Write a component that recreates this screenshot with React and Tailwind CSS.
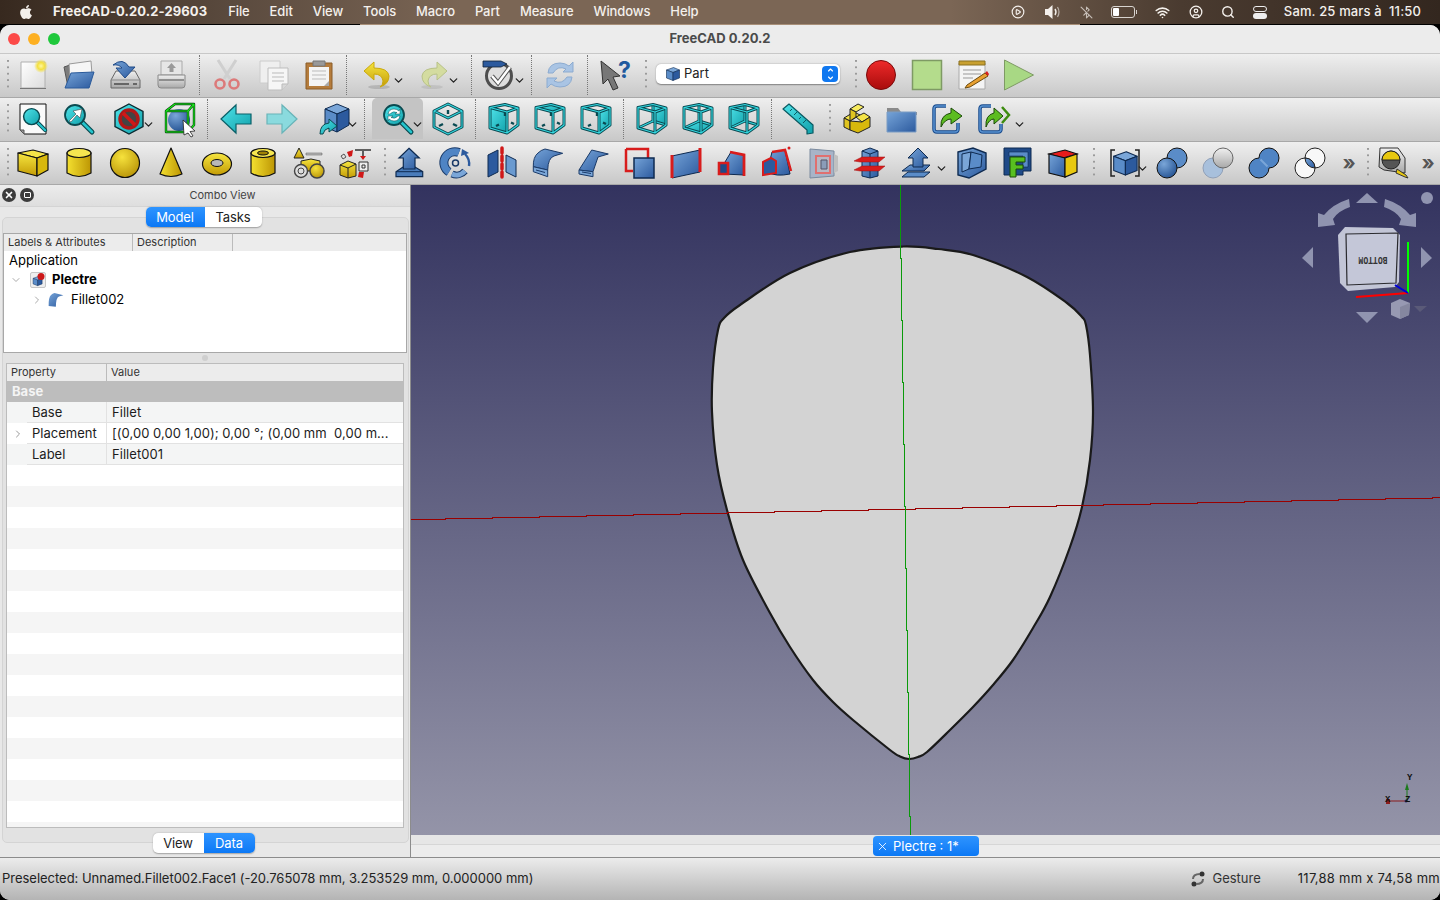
import {
  BluetoothOff,
  ChevronDown,
  ChevronRight,
  CirclePlay,
  CircleUser,
  Search,
  Wifi,
  X,
} from "lucide-react";
import { FaApple } from "react-icons/fa";

const Defs = () => (
  <svg className="absolute h-0 w-0">
    <defs>
      <linearGradient id="ylw" x1="0" y1="0" x2="0" y2="1">
        <stop offset="0" stopColor="#f6e640" />
        <stop offset="1" stopColor="#c49c06" />
      </linearGradient>
      <linearGradient id="ylh" x1="0" y1="0" x2="1" y2="0">
        <stop offset="0" stopColor="#f4e030" />
        <stop offset="1" stopColor="#bd9604" />
      </linearGradient>
      <linearGradient id="blu" x1="0" y1="0" x2="1" y2="1">
        <stop offset="0" stopColor="#76a4d8" />
        <stop offset="1" stopColor="#2c5a9e" />
      </linearGradient>
      <linearGradient id="tl" x1="0" y1="0" x2="1" y2="1">
        <stop offset="0" stopColor="#50e4ea" />
        <stop offset="1" stopColor="#10a0aa" />
      </linearGradient>
      <linearGradient id="gry" x1="0" y1="0" x2="0" y2="1">
        <stop offset="0" stopColor="#f0f0f0" />
        <stop offset="1" stopColor="#a8a8a8" />
      </linearGradient>
      <linearGradient id="pg" x1="0" y1="0" x2="1" y2="1">
        <stop offset="0" stopColor="#ffffff" />
        <stop offset="1" stopColor="#dcdcdc" />
      </linearGradient>
      <linearGradient id="red" x1="0" y1="0" x2="0" y2="1">
        <stop offset="0" stopColor="#ee2a2a" />
        <stop offset="1" stopColor="#a80c0c" />
      </linearGradient>
      <radialGradient id="glow">
        <stop offset="0" stopColor="#fff8a0" />
        <stop offset="0.5" stopColor="#f4e040" />
        <stop offset="1" stopColor="#f4e040" stopOpacity="0" />
      </radialGradient>
      <radialGradient id="sph" cx="0.35" cy="0.3" r="0.8">
        <stop offset="0" stopColor="#7aa6d8" />
        <stop offset="1" stopColor="#204f90" />
      </radialGradient>
      <radialGradient id="ysph" cx="0.4" cy="0.3" r="0.8">
        <stop offset="0" stopColor="#f6e23c" />
        <stop offset="1" stopColor="#b48e04" />
      </radialGradient>
      <linearGradient id="viewBg" x1="0" y1="0" x2="0" y2="1">
        <stop offset="0" stopColor="#33335f" />
        <stop offset="1" stopColor="#9494a8" />
      </linearGradient>
    </defs>
  </svg>
);

const Ic = ({ children, className = "" }) => (
  <svg viewBox="0 0 32 32" className={`h-8 w-8 overflow-visible ${className}`} fill="none">
    {children}
  </svg>
);

const YBox = () => (
  <g stroke="#111" strokeWidth="1.2" strokeLinejoin="round">
    <path d="M1 6 16 3 31 7 20 11Z" fill="#f4e448" />
    <path d="M1 6 20 11V29L1 24Z" fill="url(#ylw)" />
    <path d="M20 11 31 7V23L20 29Z" fill="#d8b80c" />
  </g>
);

const BBox = () => (
  <g stroke="#0e2a50" strokeWidth="1.2" strokeLinejoin="round">
    <path d="M3 8 17 3 29 8 16 13Z" fill="#7aa6d8" />
    <path d="M3 8 16 13V29L3 24Z" fill="#5a8cc8" />
    <path d="M16 13 29 8V24L16 29Z" fill="#2c5a9e" />
  </g>
);

const frontEdges = "M2 4.500 17 1.500 30 5 19 9ZM2 4.500V25L19 30V9M19 30 30 22V5";
const backEdges = "M17 1.500V18M17 18 2 25M17 18 30 22";

// wire cube for the standard views, face = the filled side
const ViewCube = ({ face, back }) => (
  <g strokeLinejoin="round">
    {face && <path d={face} fill="url(#tl)" />}
    {back ? (
      <g>
        <path d={backEdges} stroke="#0a4a52" strokeWidth="3" />
        <path d={backEdges} stroke="#34d8e0" strokeWidth="1.200" />
      </g>
    ) : (
      <path d="M17 9V13M8 23 11 21.500M23 19.500 26 21" stroke="#0a4a52" strokeWidth="2.400" />
    )}
    <path d={frontEdges} stroke="#0a4a52" strokeWidth="3" />
    <path d={frontEdges} stroke="#34d8e0" strokeWidth="1.200" />
  </g>
);

const Glass = ({ children }) => (
  <g>
    <path d="M19 19 29 29" stroke="#0b4a50" strokeWidth="5" strokeLinecap="round" />
    <path d="M19 19 29 29" stroke="#24c4cc" strokeWidth="2.6" strokeLinecap="round" />
    <circle cx="12" cy="12" r="10" fill="url(#tl)" stroke="#0b4a50" strokeWidth="1.8" />
    {children}
  </g>
);

const I = {
  newDoc: (
    <Ic>
      <path d="M4 3H28V29H4Z" fill="url(#pg)" stroke="#b0b0b0" />
      <path d="M3 29.500H29" stroke="#777" />
      <circle cx="24" cy="7" r="7" fill="url(#glow)" />
    </Ic>
  ),
  open: (
    <Ic>
      <path d="M1 8 7 6V26L5 28Z" fill="#7c7c7c" stroke="#555" />
      <path d="M6 5 28 2 29 16 7 19Z" fill="#f6f6f6" stroke="#999" />
      <path d="M2 29 8 14 31 13 26 29Z" fill="url(#blu)" stroke="#2a5a9a" />
    </Ic>
  ),
  save: (
    <Ic>
      <path d="M2 21 7 12H26L31 21V29H2Z" fill="url(#gry)" stroke="#666" />
      <path d="M2 21H31" stroke="#888" />
      <path d="M5 25H20M24 25H28" stroke="#666" strokeWidth="2" />
      <path d="M4 6Q14-2 20 8H26L16 19 7 9H13Q10 5 4 6Z" fill="url(#blu)" stroke="#1f4a88" />
    </Ic>
  ),
  print: (
    <Ic>
      <path d="M6 2H27V16H6Z" fill="#e6e6e6" stroke="#aaa" />
      <path d="M16.500 4 21 9H18.500V13H14.500V9H12Z" fill="#9a9a9a" />
      <path d="M3 16H30V26Q30 29 27 29H6Q3 29 3 26Z" fill="url(#gry)" stroke="#888" />
      <path d="M4 21H29" stroke="#777" strokeWidth="1.500" />
    </Ic>
  ),
  cut: (
    <Ic>
      <path d="M7 1 19 20M25 1 13 20" stroke="#cfcfcf" strokeWidth="3" />
      <circle cx="9" cy="25" r="4.500" stroke="#dc7a7a" strokeWidth="2.600" />
      <circle cx="23" cy="25" r="4.500" stroke="#dc7a7a" strokeWidth="2.600" />
    </Ic>
  ),
  copy: (
    <Ic>
      <path d="M3 2H23V24H3Z" fill="#efefef" stroke="#ccc" />
      <path d="M11 9H31V25L25 31H11Z" fill="#f6f6f6" stroke="#bdbdbd" />
      <path d="M15 14H27M15 18H27M15 22H27" stroke="#bbb" />
      <path d="M25 31V25H31" fill="#d8d8d8" stroke="#bbb" />
    </Ic>
  ),
  paste: (
    <Ic>
      <path d="M3 4H29V30H3Z" fill="#b57c3c" stroke="#8a5c28" />
      <path d="M6 8H26V27H6Z" fill="#f4f4f4" />
      <path d="M9 12H23M9 16H23M9 20H23" stroke="#bbb" />
      <path d="M10 2H22V7H10Z" fill="#999" stroke="#777" />
      <path d="M21 27 26 22V27Z" fill="#aaa" />
    </Ic>
  ),
  undo: (
    <Ic>
      <ellipse cx="17" cy="28" rx="11" ry="2" fill="#00000022" />
      <path d="M12 3 2 12 12 21V15Q20 15 21 22 21 26 18 28 27 25 27 17 26 9 12 9Z" fill="url(#ylw)" stroke="#caa90c" />
    </Ic>
  ),
  redo: (
    <Ic>
      <ellipse cx="15" cy="28" rx="11" ry="2" fill="#00000014" />
      <path d="M20 3 30 12 20 21V15Q12 15 11 22 11 26 14 28 5 25 5 17 6 9 20 9Z" fill="#d4dca0" stroke="#b8c288" />
    </Ic>
  ),
  check: (
    <Ic>
      <circle cx="16" cy="17" r="12.500" fill="#dedede" stroke="#4e4e4e" strokeWidth="3" />
      <path d="M9 17 15 24 27 8" stroke="#555" strokeWidth="4.500" />
      <path d="M9 17 15 24 27 8" stroke="#fff" strokeWidth="2.400" />
      <path d="M0 2H18L24 5 18 8H0Z" fill="#2c5a9e" stroke="#123" strokeWidth="0.800" />
    </Ic>
  ),
  refresh: (
    <Ic>
      <path d="M4 14Q5 4 16 4 21 4 25 7L29 3V13H19L22 10Q14 6 9 14Z" fill="#a9c4e4" stroke="#8cabd0" />
      <path d="M28 18Q27 28 16 28 11 28 7 25L3 29V19H13L10 22Q18 26 23 18Z" fill="#a9c4e4" stroke="#8cabd0" />
    </Ic>
  ),
  what: (
    <Ic>
      <path d="M2 2 21 17 14 18 19 29 14 31 9 20 4 25Z" fill="#777" stroke="#333" />
      <text x="19" y="19" fontSize="23" fontWeight="700" fill="#1f5a9e" fontFamily="Inter, sans-serif">
        ?
      </text>
    </Ic>
  ),
  rec: (
    <Ic>
      <circle cx="16" cy="16" r="14.500" fill="url(#red)" stroke="#7a0a0a" />
    </Ic>
  ),
  stop: (
    <Ic>
      <path d="M1.500 1.500H30.500V30.500H1.500Z" fill="#b4dc8c" stroke="#7e9a64" strokeWidth="1.500" />
    </Ic>
  ),
  macro: (
    <Ic>
      <path d="M2 4H28V30H2Z" fill="#f4f4f4" stroke="#aaa" />
      <path d="M2 2H28V6H2Z" fill="#c8a030" stroke="#8a7020" />
      <path d="M6 11H24M6 15H24M6 19H16" stroke="#999" />
      <path d="M10 26 28 14 31 17 13 28 8 29Z" fill="#e8a030" stroke="#6a4a10" />
      <path d="M28 14 31 17 32 15 30 12Z" fill="#d82020" />
    </Ic>
  ),
  play: (
    <Ic>
      <path d="M1.500 1 30.500 16 1.500 31Z" fill="#a8d884" stroke="#7e9a64" />
    </Ic>
  ),

  fitAll: (
    <Ic>
      <path d="M3 1H29V31H7L3 27Z" fill="#fafafa" stroke="#111" />
      <path d="M3 27H7V31Z" fill="#999" stroke="#555" />
      <g transform="translate(5 4) scale(0.8)">
        <Glass />
      </g>
    </Ic>
  ),
  fitSel: (
    <Ic>
      <Glass>
        <path d="M6 18 13 11 10 8 19 6 17 15 14 12 8 19Z" fill="#fff" stroke="#444" strokeWidth="0.600" />
      </Glass>
    </Ic>
  ),
  noDraw: (
    <Ic>
      <path d="M16 1 30 8.500V23.500L16 31 2 23.500V8.500Z" fill="url(#tl)" stroke="#0b2a30" strokeWidth="1.400" />
      <circle cx="16" cy="16" r="9" fill="#444" stroke="#b01818" strokeWidth="3.500" />
      <path d="M10 10 22 22" stroke="#d01818" strokeWidth="3.500" />
    </Ic>
  ),
  select: (
    <Ic>
      <circle cx="15" cy="17" r="11" fill="url(#sph)" />
      <path d="M2 8 11 1H30V22L24 29H2ZM2 8H24V29M24 8 30 1" stroke="#063a10" strokeWidth="2.400" strokeLinejoin="round" />
      <path d="M2 8 11 1H30V22L24 29H2ZM2 8H24V29M24 8 30 1" stroke="#18e818" strokeWidth="1.200" strokeLinejoin="round" />
      <path d="M19 17 31 28 26 28.500 29 33 27 34 24 30 20 32Z" fill="#fff" stroke="#222" strokeWidth="0.800" />
    </Ic>
  ),
  back: (
    <Ic>
      <path d="M1 16 16 2V11H31V21H16V30Z" fill="url(#tl)" stroke="#0a6068" strokeWidth="1.200" />
    </Ic>
  ),
  forward: (
    <Ic>
      <path d="M31 16 16 2V11H1V21H16V30Z" fill="#8adade" stroke="#68b4b8" strokeWidth="1.200" />
    </Ic>
  ),
  viewCube: (
    <Ic>
      <path d="M8 6 20 1 32 6 20 11Z" fill="#7aa6d8" stroke="#0e2a50" />
      <path d="M8 6 20 11V29L8 24Z" fill="#5a8cc8" stroke="#0e2a50" />
      <path d="M20 11 32 6V22L20 29Z" fill="#2c5a9e" stroke="#0e2a50" />
      <path d="M3 31Q3 21 12 20V16L20 23 12 29V25Q7 26 6 31Z" fill="url(#tl)" stroke="#0a4a50" />
    </Ic>
  ),
  sync: (
    <Ic>
      <Glass>
        <path d="M6 11Q7 6 12 6 15 6 17 8L18 6V11H13L15 9.500Q11 7.500 8 11Z" fill="#fff" stroke="#0b4a50" strokeWidth="0.500" />
        <path d="M18 13Q17 18 12 18 9 18 7 16L6 18V13H11L9 14.500Q13 16.500 16 13Z" fill="#fff" stroke="#0b4a50" strokeWidth="0.500" />
      </Glass>
    </Ic>
  ),
  iso: (
    <Ic>
      <path d="M16 1 30 8V24L16 31 2 24V8ZM2 8 16 15 30 8" stroke="#0a4a52" strokeWidth="3" strokeLinejoin="round" />
      <path d="M16 1 30 8V24L16 31 2 24V8ZM2 8 16 15 30 8" stroke="#34d8e0" strokeWidth="1.100" strokeLinejoin="round" />
      <path d="M7 23 11 21M21 21 25 23M16 7V11" stroke="#0a4a52" strokeWidth="2.400" />
    </Ic>
  ),
  front: <Ic><ViewCube face="M2 4.500 19 9V30L2 25Z" /></Ic>,
  top: <Ic><ViewCube face="M2 4.500 17 1.500 30 5 19 9Z" /></Ic>,
  right: <Ic><ViewCube face="M19 9 30 5V22L19 30Z" /></Ic>,
  rear: <Ic><ViewCube back face="M17 1.500 30 5V22L17 18Z" /></Ic>,
  bottom: <Ic><ViewCube back face="M2 25 17 18 30 22 19 30Z" /></Ic>,
  left: <Ic><ViewCube back face="M2 4.500 17 1.500V18L2 25Z" /></Ic>,
  ruler: (
    <Ic>
      <path d="M1 6 7 1 31 22 31 30 25 31 25 27Z" fill="url(#tl)" stroke="#0a5a62" strokeWidth="1.200" strokeLinejoin="round" />
      <path d="M8 8 10 6M12 12 15 9M17 16 19 14M21 20 24 17" stroke="#0a5a62" />
    </Ic>
  ),
  part: (
    <Ic>
      <g stroke="#222" strokeWidth="1" strokeLinejoin="round">
        <path d="M4 15 14 9 20 12 10 18Z" fill="#f4e448" />
        <path d="M4 15 10 18V27L4 24Z" fill="#e0c420" />
        <path d="M16 14 24 10 30 14 22 19Z" fill="#f4e448" />
        <path d="M10 18 22 19 30 14V24L18 30 10 27Z" fill="#d8b80c" />
        <path d="M10 6 18 1 24 4 16 9Z" fill="#f8ec60" />
        <path d="M10 6 16 9V14L10 18Z" fill="#e0c420" />
      </g>
    </Ic>
  ),
  folder: (
    <Ic>
      <path d="M1 5H12L15 9H31V12H1Z" fill="#8a8a8a" />
      <path d="M1 9H30V29H1Z" fill="url(#blu)" stroke="#7a9cc4" />
    </Ic>
  ),
  link: (
    <Ic>
      <path d="M14 3H5Q2 3 2 6V26Q2 29 5 29H23Q26 29 26 26V20" stroke="#174a8c" strokeWidth="3.500" />
      <path d="M14 3H5Q2 3 2 6V26Q2 29 5 29H23Q26 29 26 26V20" stroke="#5a92d0" strokeWidth="1.500" />
      <path d="M9 24Q8 12 19 10V5L30 13 19 21V16Q13 16 9 24Z" fill="#5cbc20" stroke="#1a4a08" />
    </Ic>
  ),
  link2: (
    <Ic>
      <path d="M13 3H5Q2 3 2 6V26Q2 29 5 29H20Q23 29 23 26V21" stroke="#174a8c" strokeWidth="3.500" />
      <path d="M13 3H5Q2 3 2 6V26Q2 29 5 29H20Q23 29 23 26V21" stroke="#5a92d0" strokeWidth="1.500" />
      <path d="M8 24Q7 12 16 10V5L25 13 16 21V16Q11 16 8 24Z" fill="#5cbc20" stroke="#1a4a08" />
      <path d="M24 4 31 12 24 20" stroke="#3e8c10" strokeWidth="2.500" />
    </Ic>
  ),

  cube: <Ic><YBox /></Ic>,
  cyl: (
    <Ic>
      <path d="M4 6V26Q16 33 28 26V6Z" fill="url(#ylh)" stroke="#111" strokeWidth="1.200" />
      <ellipse cx="16" cy="6" rx="12" ry="4.500" fill="#f6e650" stroke="#111" strokeWidth="1.200" />
    </Ic>
  ),
  sphere: (
    <Ic>
      <circle cx="16" cy="16" r="14.500" fill="url(#ysph)" stroke="#111" strokeWidth="1.200" />
    </Ic>
  ),
  cone: (
    <Ic>
      <path d="M16 1 27 27Q16 32 5 27Z" fill="url(#ylh)" stroke="#111" strokeWidth="1.200" strokeLinejoin="round" />
    </Ic>
  ),
  torus: (
    <Ic>
      <ellipse cx="16" cy="17" rx="14.500" ry="11" fill="url(#ylw)" stroke="#111" strokeWidth="1.200" />
      <ellipse cx="16" cy="16" rx="6" ry="3.500" fill="#b8b8b8" stroke="#111" />
    </Ic>
  ),
  tube: (
    <Ic>
      <path d="M4 6V26Q16 33 28 26V6Z" fill="url(#ylh)" stroke="#111" strokeWidth="1.200" />
      <ellipse cx="16" cy="6" rx="12" ry="4.500" fill="#f6e650" stroke="#111" strokeWidth="1.200" />
      <ellipse cx="16" cy="6" rx="5.500" ry="2" fill="#a08204" stroke="#111" />
    </Ic>
  ),
  shapes: (
    <Ic>
      <path d="M6 1 11 11H1Z" fill="url(#ylw)" stroke="#222" />
      <path d="M13 6H29V8H13Z" fill="#bbb" stroke="#555" strokeWidth="0.500" />
      <path d="M8 14 18 12 27 14V24H8Z" fill="url(#ylw)" stroke="#222" />
      <circle cx="8" cy="24" r="6.500" fill="#ddd" stroke="#444" strokeWidth="1.400" />
      <circle cx="8" cy="24" r="3" stroke="#444" />
      <circle cx="24" cy="24" r="7" fill="url(#ysph)" stroke="#444" strokeWidth="1.500" />
    </Ic>
  ),
  builder: (
    <Ic>
      <path d="M16 3H32M24 4V11" stroke="#333" strokeWidth="1.500" />
      <path d="M21 9H27L24 13Z" fill="#d01818" />
      <path d="M20 15H29V24H20Z" fill="#eee" stroke="#333" />
      <path d="M23 18H26V21H23Z" stroke="#333" />
      <path d="M1 18 9 14 17 17V29L9 31 1 28Z" fill="url(#ylw)" stroke="#222" />
      <path d="M1 18 9 21 17 17M9 21V31" stroke="#222" />
      <path d="M8 5 14 3 13 9 10 10Z" fill="#d01818" />
      <path d="M2 9 5 7 7 10 4 12Z" stroke="#555" />
      <path d="M20 25 25 25 24 31 19 30Z" fill="#d01818" />
    </Ic>
  ),
  extrude: (
    <Ic>
      <path d="M3 24.700 10 20H22L29.700 24.700V29.700H3Z" fill="#4a7cba" stroke="#0e2a50" strokeWidth="1.200" />
      <path d="M3 24.700H29.700" stroke="#0e2a50" />
      <path d="M16 1.300 26.300 11H22V22H10.300V11H6Z" fill="url(#blu)" stroke="#0e2a50" strokeWidth="1.200" />
    </Ic>
  ),
  revolve: (
    <Ic>
      <path d="M19 5.500A11 11 0 0 0 9 25" stroke="#1a3a68" strokeWidth="9" />
      <path d="M19 5.500A11 11 0 0 0 9 25" stroke="#4f84c4" strokeWidth="7" />
      <path d="M12 27A11 11 0 0 0 25 24" stroke="#1a3a68" strokeWidth="7" />
      <path d="M12 27A11 11 0 0 0 25 24" stroke="#7aa6d8" strokeWidth="5" />
      <circle cx="15.500" cy="16" r="3" stroke="#1a3a68" strokeWidth="1.500" />
      <path d="M25 7Q30 12 29 19" stroke="#2c5a9e" strokeWidth="2.400" />
      <path d="M21 9 22 2 29 6Z" fill="#2c5a9e" />
    </Ic>
  ),
  mirror: (
    <Ic>
      <path d="M2 8 12 3V25L2 30Z" fill="#2c5a9e" stroke="#0e2a50" />
      <path d="M20 8 30 13V30L20 25Z" fill="#6a9ad0" stroke="#0e2a50" />
      <path d="M16 1V31" stroke="#d01818" strokeWidth="3.500" strokeDasharray="5 3" strokeLinecap="round" />
    </Ic>
  ),
  fillet: (
    <Ic>
      <path d="M1.300 19.700Q1 10 6 6 9 3 13 2L30.700 6.300 22 9Q16 11 15.700 23Z" fill="url(#blu)" stroke="#1a3a68" strokeLinejoin="round" />
      <path d="M1.300 19.700 15.700 23V29.700L1.300 24.700Z" fill="#7aa6d8" stroke="#1a3a68" />
      <path d="M4 23 13 25.500" stroke="#1a3a68" />
    </Ic>
  ),
  chamfer: (
    <Ic>
      <path d="M1 23 13.700 3 30.300 7 20 10 15 24.700Z" fill="url(#blu)" stroke="#1a3a68" strokeLinejoin="round" />
      <path d="M1 23 15 24.700V29.700L1 27Z" fill="#7aa6d8" stroke="#1a3a68" />
      <path d="M4 25 13 26.500" stroke="#1a3a68" />
    </Ic>
  ),
  offset2d: (
    <Ic>
      <path d="M2 2H24V22" stroke="#d81c1c" strokeWidth="2.500" />
      <path d="M2 2V24H9" stroke="#d81c1c" strokeWidth="2.500" />
      <path d="M10 11H30V31H10Z" fill="url(#blu)" stroke="#0e2a50" strokeWidth="1.500" />
    </Ic>
  ),
  ruled: (
    <Ic>
      <path d="M2 9 30 3V25L2 31Z" fill="url(#blu)" stroke="#0e2a50" />
      <path d="M2 8V31M30 1V25" stroke="#d81c1c" strokeWidth="3" />
    </Ic>
  ),
  loft: (
    <Ic>
      <path d="M9 15 15 5 28 8V28L8 27Z" fill="url(#blu)" stroke="#0e2a50" />
      <path d="M14 5 28 8V29" stroke="#d81c1c" strokeWidth="2.800" />
      <path d="M3 16H12V27H3Z" fill="#1f4a88" stroke="#d81c1c" strokeWidth="2.600" />
    </Ic>
  ),
  sweep: (
    <Ic>
      <path d="M10 5 23 3 28 27Q14 30 5 25Z" fill="url(#blu)" stroke="#0e2a50" />
      <path d="M10 5 23 3 29 24" stroke="#d81c1c" strokeWidth="2.500" />
      <circle cx="27" cy="1" r="1.500" fill="#d81c1c" />
      <path d="M1 15 9 11 14 14V26L1 28Z" fill="#2c5a9e" stroke="#d81c1c" strokeWidth="2" />
    </Ic>
  ),
  section: (
    <Ic>
      <path d="M2 2 26 4V29L2 31Z" fill="#a8b4c8" stroke="#7a8a9e" />
      <path d="M26 7 30 9V24L26 26Z" fill="#c0c0c0" />
      <path d="M8 9H22V26H8Z" fill="#b8b8c4" stroke="#e07070" strokeWidth="2" />
      <path d="M13 13H19V22H13Z" fill="#8a9cb8" stroke="#556" />
    </Ic>
  ),
  cross: (
    <Ic>
      <path d="M8 4 16 1 24 4V29L16 31 8 29Z" fill="url(#blu)" stroke="#0e2a50" />
      <path d="M8 4 16 7 24 4M16 7V31" stroke="#0e2a50" />
      <path d="M0 14 8 10H24L31 10 25 15H6ZM0 23 8 19H31L25 24H6Z" fill="#d81c1c" stroke="#a01010" strokeWidth="0.500" />
    </Ic>
  ),
  attach: (
    <Ic>
      <path d="M2 24 10 18H30L24 24Z" fill="url(#blu)" stroke="#0e2a50" />
      <path d="M18 1 28 11H23V20H13V11H8Z" fill="url(#blu)" stroke="#0e2a50" />
      <path d="M2 30 8 25H30L24 30Z" fill="#5a8cc8" stroke="#0e2a50" />
    </Ic>
  ),
  thick: (
    <Ic>
      <path d="M3 5 18 1 31 6V22L14 31 3 28Z" fill="url(#blu)" stroke="#0e2a50" strokeWidth="1.400" />
      <path d="M7 7 16 5 14 22 7 25Z" fill="#7aa6d8" stroke="#0e2a50" />
      <path d="M16 5 27 8 26 20 14 22Z" fill="#5a8cc8" stroke="#0e2a50" />
    </Ic>
  ),
  feature: (
    <Ic>
      <path d="M3 1H30V24H22V28H3Z" fill="#1f4a88" stroke="#0e2a50" />
      <path d="M8 5H27V20H22V9H8Z" fill="#5a8cc8" stroke="#0e2a50" strokeWidth="0.600" />
      <path d="M9 10H24V15H15V18H22V22H15V30H9Z" fill="#58c020" stroke="#1a4a08" />
    </Ic>
  ),
  color: (
    <Ic>
      <path d="M2 7 18 3 30 7 16 11Z" fill="#e81c1c" stroke="#111" strokeWidth="1.200" />
      <path d="M2 7 18 11V30L2 26Z" fill="url(#blu)" stroke="#111" strokeWidth="1.200" />
      <path d="M18 11 30 7V25L18 30Z" fill="#e8c810" stroke="#111" strokeWidth="1.200" />
    </Ic>
  ),
  compound: (
    <Ic>
      <path d="M6 3H2V29H6M26 3H30V29H26" stroke="#222" strokeWidth="1.500" />
      <g transform="translate(2 2) scale(0.900)">
        <BBox />
      </g>
    </Ic>
  ),
  fuseA: (
    <Ic>
      <circle cx="21" cy="11" r="10" fill="#5a8cc8" stroke="#111" />
      <circle cx="11" cy="21" r="10" fill="url(#sph)" stroke="#111" />
    </Ic>
  ),
  cutB: (
    <Ic>
      <circle cx="11" cy="21" r="10" fill="#a8c0dc" stroke="#90a0b8" />
      <circle cx="21" cy="11" r="10" fill="url(#gry)" stroke="#666" />
    </Ic>
  ),
  union: (
    <Ic>
      <path d="M11 11A10 10 0 1 1 21 21 10 10 0 1 1 11 11Z" fill="#4f84c4" stroke="#111" />
      <path d="M12.500 12.500 19.500 19.500" stroke="#7aa6d8" strokeWidth="2" />
    </Ic>
  ),
  common: (
    <Ic>
      <circle cx="21" cy="11" r="10" fill="#f8f8f8" stroke="#222" />
      <circle cx="11" cy="21" r="10" fill="#f8f8f8" stroke="#222" />
      <path d="M11 11A10 10 0 0 1 21 21 10 10 0 0 1 11 11Z" fill="url(#blu)" stroke="#222" />
    </Ic>
  ),
  tape: (
    <Ic>
      <path d="M4 1H22L29 11V26L8 23 3 20Z" fill="url(#gry)" stroke="#333" />
      <circle cx="15" cy="13" r="9" fill="#555" stroke="#222" />
      <path d="M6 13A9 9 0 0 1 24 13Z" fill="#e8c810" stroke="#222" />
      <path d="M21 22 30 28 32 31 29 30 20 26Z" fill="#e8c810" stroke="#333" />
    </Ic>
  ),
};

const Chev = ({ className = "right-[-4px]" }) => (
  <ChevronDown className={`absolute top-[20px] h-[13px] w-[13px] text-[#222] ${className}`} strokeWidth={2.4} />
);

const B = ({ i, className = "", dd, ddClass }) => (
  <div className={`relative flex h-full w-[46px] shrink-0 items-center justify-center ${className}`}>
    {I[i]}
    {dd && <Chev className={ddClass} />}
  </div>
);

const Grip = ({ className = "" }) => (
  <div className={`h-[30px] w-[2px] shrink-0 self-center bg-[linear-gradient(#9a9a9a_2px,transparent_2px)] bg-[length:2px_6.4px] ${className}`} />
);
const Sep = ({ className = "" }) => (
  <div className={`h-[40px] w-px shrink-0 self-center border-l border-dotted border-[#777] ${className}`} />
);

const More = ({ className = "" }) => (
  <div className={`flex h-full w-[20px] shrink-0 items-center justify-center text-[20px] font-bold text-[#555] ${className}`}>
    »
  </div>
);

const rowCls =
  "flex shrink-0 border-b border-[#a8a8a8] bg-linear-to-b from-[#efefef] to-[#c8c8c8] pl-[7px]";

const Seg = ({ a, b, active, className = "" }) => (
  <div className={`flex h-[20px] shrink-0 self-center overflow-hidden rounded-[5px] bg-white text-[13px] leading-[20px] tracking-[-0.1px] shadow-[0_0.5px_1.5px_#0000004d] ${className}`}>
    {[a, b].map((t) => (
      <div
        key={t}
        className={
          t === active
            ? "bg-linear-to-b from-[#2d94ff] to-[#0a78f5] text-center text-white " + (t === "Model" ? "w-[59px]" : "w-[51px]")
            : "text-center text-[#222] " + (t === "Tasks" ? "w-[57px]" : "w-[51px]")
        }
      >
        {t}
      </div>
    ))}
  </div>
);

const propRows = [
  ["Base", "Fillet", false],
  ["Placement", "[(0,00 0,00 1,00); 0,00 °; (0,00 mm  0,00 m...", true],
  ["Label", "Fillet001", false],
];

// outline of the pick, sampled off the reference and smoothed
const outline = [
  [903, 246.5], [850, 252], [790, 273], [740, 305], [724, 318], [718, 330], [713, 368], [712, 412],
  [717, 465], [727, 510], [743, 560], [770, 613], [790, 647], [813, 680], [833, 702], [853, 720], [890, 750], [900, 756.5],
  [909, 759], [918, 757], [927, 752], [950, 730], [973, 707], [993, 685], [1013, 660], [1033, 628], [1050, 597], [1070, 547], [1082, 507],
  [1090, 460], [1093, 412], [1090, 355], [1086, 325], [1082, 317], [1067, 303], [1027, 277], [973, 255], [938, 249],
];

const smooth = (pts) => {
  const n = pts.length;
  let d = `M${pts[0][0]} ${pts[0][1]}`;
  for (let i = 0; i < n; i++) {
    const [p0, p1, p2, p3] = [pts[(i - 1 + n) % n], pts[i], pts[(i + 1) % n], pts[(i + 2) % n]];
    d += `C${p1[0] + (p2[0] - p0[0]) / 6} ${p1[1] + (p2[1] - p0[1]) / 6} ${p2[0] - (p3[0] - p1[0]) / 6} ${p2[1] - (p3[1] - p1[1]) / 6} ${p2[0]} ${p2[1]}`;
  }
  return d + "Z";
};

// the axes are stair-stepped, no antialiasing in the 3D view
let redAxis = "M411 519.5";
for (let k = 1; k <= 22; k++) redAxis += `H${398 + 47 * k}V${519.5 - k}`;
redAxis += "H1440";

let greenAxis = "M900.5 185";
for (let k = 0; k <= 9; k++) greenAxis += `V${258 + 62 * k}H${901.5 + k}`;
greenAxis += "V835";

const Viewport = () => (
  <svg viewBox="411 185 1029 650" className="block h-[650px] w-[1029px] shrink-0">
    <rect x="411" y="185" width="1029" height="650" fill="url(#viewBg)" />
    <path d={smooth(outline)} fill="#d3d3d3" stroke="#1a1a1a" strokeWidth="2.200" />
    <path d={redAxis} fill="none" stroke="#9a0000" strokeWidth="1" shapeRendering="crispEdges" />
    <path d={greenAxis} fill="none" stroke="#0a9a0a" strokeWidth="1" shapeRendering="crispEdges" />

    {/* nav cube */}
    <g fill="#9094b0">
      <circle cx="1427" cy="198" r="6" />
      <path d="M1356 203H1378L1367 193Z" />
      <path d="M1356 312H1378L1367 323Z" />
      <path d="M1313 247V268L1302 258Z" />
      <path d="M1421 247V268L1432 258Z" />
      <path d="M1349 199 1350 207Q1338 211 1333 219L1335 225 1318 227 1318 213 1324 215Q1333 204 1349 199Z" />
      <path d="M1385 199 1384 207Q1396 211 1401 219L1399 225 1416 227 1416 213 1410 215Q1401 204 1385 199Z" />
    </g>
    <path d="M1345 227 1393 228 1400 235 1399 282 1395 287 1348 291 1340 283 1338 235Z" fill="#c2c5d6" />
    <path d="M1346 234 1398 233 1396 283 1347 285Z" fill="#c4c7d8" stroke="#2a2a2e" strokeWidth="1.200" />
    <text
      x="-1373"
      y="-257"
      transform="scale(-1 -1)"
      textAnchor="middle"
      textLength="29"
      lengthAdjust="spacingAndGlyphs"
      fontSize="10"
      fontWeight="700"
      fontFamily="Liberation Mono, monospace"
      fill="#333"
    >
      BOTTOM
    </text>
    <path d="M1408 242V293" stroke="#00ff00" strokeWidth="2" />
    <path d="M1356 297 1408 293" stroke="#ff0000" strokeWidth="2" />
    <path d="M1395 285 1408 293" stroke="#0000dd" strokeWidth="2" />
    <path d="M1400 299 1410 303 1409 315 1400 319 1391 315 1391 303Z" fill="#9799b2" />
    <path d="M1400 307 1410 303 1409 315 1400 319Z" fill="#85879f" />
    <path d="M1414 306H1427L1420 312Z" fill="#5a5a78" />

    {/* corner axes */}
    <path d="M1387 801H1407" stroke="#8a1c1c" />
    <path d="M1407 801V788" stroke="#1c7a1c" />
    <path d="M1405 790 1407 783 1409 790Z" fill="#1c7a1c" />
    <path d="M1386 799H1390V804H1386Z" fill="#8a1c1c" />
    <circle cx="1406" cy="801" r="1.500" fill="#2a2a8a" />
    <g fontSize="9" fontFamily="Liberation Mono, monospace" fill="#111" fontWeight="700">
      <text x="1385" y="802">X</text>
      <text x="1405" y="802">Z</text>
      <text x="1407" y="780">Y</text>
    </g>
  </svg>
);

export default function App() {
  return (
    <div className="relative flex h-[900px] w-[1440px] flex-col overflow-hidden bg-black text-[13px] text-[#1c1c1c] [font-family:Inter,sans-serif]">
      <Defs />

      {/* mac menu bar */}
      <div className="flex h-[24px] shrink-0 items-center bg-[linear-gradient(90deg,#37291f_0%,#5a4a3e_16%,#7b6655_32%,#7b6655_66%,#4a3b30_82%,#33271f_100%)] pr-[19px] text-[13px] font-medium text-[#f4f0ec]">
        <FaApple className="ml-[19px] h-[16px] w-[14px]" />
        <span className="ml-[20px] font-bold tracking-[0.1px]">FreeCAD-0.20.2-29603</span>
        <div className="ml-[21px] flex gap-[20px] tracking-[-0.1px]">
          {["File", "Edit", "View", "Tools", "Macro", "Part", "Measure", "Windows", "Help"].map((m) => (
            <span key={m}>{m}</span>
          ))}
        </div>
        <div className="ml-auto flex items-center gap-[15px]">
          <CirclePlay className="h-[14px] w-[14px]" />
          <svg viewBox="0 0 18 16" className="ml-[4px] h-[16px] w-[18px]" fill="none">
            <path d="M1 5H4L8.500 1V15L4 11H1Z" fill="#f4f0ec" />
            <path d="M11 5Q13 8 11 11" stroke="#f4f0ec" strokeWidth="1.400" />
            <path d="M13.500 3Q16.500 8 13.500 13" stroke="#f4f0ec" strokeOpacity="0.600" strokeWidth="1.200" />
          </svg>
          <BluetoothOff className="ml-[3px] h-[13px] w-[13px] opacity-70" />
          <div className="relative ml-[3px] flex items-center">
            <div className="h-[12px] w-[24px] rounded-[3px] border border-[#d8d4d0]">
              <div className="ml-[1px] mt-[1px] h-[8px] w-[6px] rounded-[1px] bg-white" />
            </div>
            <div className="ml-[1px] h-[4px] w-px bg-[#d8d4d0]" />
          </div>
          <Wifi className="ml-[2px] h-[15px] w-[17px]" strokeWidth={2.6} />
          <CircleUser className="ml-[3px] h-[14px] w-[14px]" strokeWidth={2.2} />
          <Search className="ml-[3px] h-[14px] w-[14px]" strokeWidth={2.4} />
          <div className="ml-[3px] flex flex-col gap-[1px]">
            <div className="h-[6px] w-[14px] rounded-full border-[1.5px] border-[#eee] bg-transparent" />
            <div className="h-[6px] w-[14px] rounded-full bg-[#eee]" />
          </div>
          <span className="ml-[2px] whitespace-pre tracking-[0.15px]">Sam. 25 mars à  11:50</span>
        </div>
      </div>
      <div className="h-px shrink-0 bg-[linear-gradient(90deg,#000_0%,#000_25%,#a88f78_25%,#a88f78_75%,#000_75%)]" />

      <div className="flex flex-1 flex-col overflow-hidden rounded-t-[10px] rounded-b-[10px] bg-[#e6e6e6]">
        {/* title bar */}
        <div className="relative flex h-[29px] shrink-0 items-center justify-center border-b border-[#c8c8c8] bg-[#ececec] text-[13px] font-bold text-[#4a4a4a]">
          <div className="absolute left-[8px] top-[8px] flex gap-[8px]">
            <div className="h-3 w-3 rounded-full bg-[#fc4a48]" />
            <div className="h-3 w-3 rounded-full bg-[#fdb022]" />
            <div className="h-3 w-3 rounded-full bg-[#1fc83c]" />
          </div>
          FreeCAD 0.20.2
        </div>

        {/* toolbar 1 */}
        <div className={`${rowCls} h-[44px] pb-[2px]`}>
          <Grip />
          <B i="newDoc" className="ml-px" />
          <B i="open" />
          <B i="save" />
          <B i="print" />
          <Sep className="ml-[5px]" />
          <B i="cut" className="ml-[4px]" />
          <B i="copy" />
          <B i="paste" />
          <Sep className="ml-[4px]" />
          <B i="undo" className="ml-[8px]" dd />
          <B i="redo" className="ml-[9px]" dd />
          <Sep className="ml-[15px]" />
          <B i="check" className="ml-[4px]" dd />
          <Sep className="ml-[9px]" />
          <B i="refresh" className="ml-[5px]" />
          <Sep className="ml-[4px]" />
          <B i="what" className="ml-[4px]" />
          <Grip className="ml-[7px]" />
          <div className="ml-[9px] flex h-[20px] w-[184px] shrink-0 -translate-y-[1px] items-center self-center rounded-[5px] bg-white pl-[9px] text-[13px] text-[#222] shadow-[0_0.5px_1.5px_#00000066]">
            <svg viewBox="0 0 32 32" className="h-[16px] w-[16px]">
              <BBox />
            </svg>
            <span className="ml-[3px]">Part</span>
            <div className="ml-auto mr-[2px] flex h-[16px] w-[16px] flex-col items-center justify-center rounded-[4px] bg-[#1078f0] text-white">
              <ChevronDown className="h-[8px] w-[9px] rotate-180" strokeWidth={3.5} />
              <ChevronDown className="h-[8px] w-[9px]" strokeWidth={3.5} />
            </div>
          </div>
          <Grip className="ml-[15px]" />
          <B i="rec" className="ml-px" />
          <B i="stop" />
          <B i="macro" />
          <B i="play" />
        </div>

        {/* toolbar 2 */}
        <div className={`${rowCls} h-[44px] pb-[2px]`}>
          <Grip />
          <B i="fitAll" className="ml-px" />
          <B i="fitSel" />
          <B i="noDraw" className="ml-[4px]" dd ddClass="right-[-3px]" />
          <B i="select" className="ml-[5px]" />
          <Sep className="ml-[4px]" />
          <B i="back" className="ml-[5px]" />
          <B i="forward" />
          <B i="viewCube" className="ml-[5px]" dd ddClass="right-[-3px]" />
          <Sep className="ml-[8px]" />
          <div className="relative ml-[7px] flex h-full w-[51px] shrink-0 items-center justify-center rounded-t-[5px] bg-[#c4c4c4]">
            {I.sync}
            <Chev className="right-[-1px]" />
          </div>
          <B i="iso" className="ml-[2px]" />
          <Sep className="ml-[4px]" />
          <B i="front" className="ml-[5px]" />
          <B i="top" />
          <B i="right" />
          <Sep className="ml-[4px]" />
          <B i="rear" className="ml-[5px]" />
          <B i="bottom" />
          <B i="left" />
          <Sep className="ml-[4px]" />
          <B i="ruler" className="ml-[3px]" />
          <Grip className="ml-[8px]" />
          <B i="part" className="ml-[2px]" />
          <B i="folder" />
          <B i="link" />
          <B i="link2" dd ddClass="right-[-9px]" />
        </div>

        {/* toolbar 3 */}
        <div className={`${rowCls} h-[43px]`}>
          <Grip />
          <B i="cube" className="ml-px" />
          <B i="cyl" />
          <B i="sphere" />
          <B i="cone" />
          <B i="torus" />
          <B i="tube" />
          <B i="shapes" />
          <B i="builder" />
          <Grip className="ml-[6px]" />
          <B i="extrude" />
          <B i="revolve" className="ml-px" />
          <B i="mirror" />
          <B i="fillet" />
          <B i="chamfer" />
          <B i="offset2d" />
          <B i="ruled" />
          <B i="loft" />
          <B i="sweep" />
          <B i="section" />
          <B i="cross" />
          <B i="attach" dd ddClass="right-[-9px]" />
          <B i="thick" className="ml-[9px]" />
          <B i="feature" />
          <B i="color" />
          <Grip className="ml-[7px]" />
          <B i="compound" className="ml-[7px]" dd ddClass="right-[-1px]" />
          <B i="fuseA" className="ml-px" />
          <B i="cutB" />
          <B i="union" />
          <B i="common" />
          <More className="ml-[6px]" />
          <Grip className="ml-[8px]" />
          <B i="tape" />
          <More className="ml-[3px]" />
        </div>

        {/* main area */}
        <div className="flex h-[672px] shrink-0">
          <div className="flex w-[411px] shrink-0 flex-col border-r border-[#8c8c8c] bg-[#e8e8e8]">
            <div className="relative flex h-[22px] shrink-0 items-center justify-center border-b border-[#d4d4d4] bg-linear-to-b from-[#ececec] to-[#dedede] pl-[35px] text-[11px] text-[#444]">
              <div className="absolute left-[2px] top-[3px] flex gap-[4px]">
                <div className="flex h-[14px] w-[14px] items-center justify-center rounded-full bg-[#3c3c3c] text-white">
                  <X className="h-[10px] w-[10px]" strokeWidth={4} />
                </div>
                <div className="flex h-[14px] w-[14px] items-center justify-center rounded-full bg-[#3c3c3c]">
                  <div className="h-[6px] w-[7px] rounded-[1px] border border-white" />
                </div>
              </div>
              Combo View
            </div>

            <div className="mx-[2px] mt-[10px] flex h-[626px] w-[407px] shrink-0 flex-col rounded-[5px] border border-[#d4d4d4] bg-[#e2e2e2]">
              <Seg a="Model" b="Tasks" active="Model" className="-mt-[11px] -translate-x-[2px]" />

              <div className="ml-[0px] mr-[1px] mt-[6px] flex h-[120px] shrink-0 flex-col border border-[#a8a8a8] bg-white">
                <div className="flex h-[17px] shrink-0 items-center bg-[#ececec] text-[11px] text-[#333]">
                  <div className="w-[129px] border-r border-[#bbb] pl-[4px]">Labels &amp; Attributes</div>
                  <div className="w-[100px] border-r border-[#bbb] pl-[4px]">Description</div>
                </div>
                <div className="-mt-[1px] pl-[5px] text-[13px] leading-[20px] text-black">Application</div>
                <div className="flex h-[19px] items-center text-[13px] text-black">
                  <ChevronDown className="ml-[6px] h-[12px] w-[12px] text-[#aaa]" strokeWidth={2} />
                  <svg viewBox="0 0 32 32" className="ml-[8px] h-[16px] w-[16px]">
                    <rect x="1" y="1" width="30" height="30" rx="3" fill="#eee" stroke="#999" />
                    <g transform="translate(4 7) scale(0.700)">
                      <BBox />
                    </g>
                    <circle cx="22" cy="9" r="7" fill="#cc1818" />
                  </svg>
                  <span className="ml-[6px] font-bold">Plectre</span>
                </div>
                <div className="flex h-[21px] items-center text-[13px] text-black">
                  <ChevronRight className="ml-[27px] h-[12px] w-[12px] text-[#aaa]" strokeWidth={2} />
                  <svg viewBox="0 0 32 32" className="ml-[5px] h-[16px] w-[16px]">
                    <path d="M1.300 28Q1 10 6 6 9 3 13 2L30.700 6.300 22 9Q16 11 15.700 29.700Z" fill="url(#blu)" />
                  </svg>
                  <span className="ml-[7px]">Fillet002</span>
                </div>
              </div>

              <div className="flex h-[10px] shrink-0 items-center justify-center">
                <div className="h-[6px] w-[6px] -translate-x-px rounded-full bg-[#cfcfcf]" />
              </div>

              <div className="ml-[3px] mr-[4px] flex h-[465px] shrink-0 flex-col overflow-hidden border border-[#bcbcbc] bg-white">
                <div className="flex h-[17px] shrink-0 items-center bg-[#ececec] text-[11px] text-[#333]">
                  <div className="w-[100px] border-r border-[#bbb] pl-[4px]">Property</div>
                  <div className="pl-[4px]">Value</div>
                </div>
                <div className="flex h-[21px] shrink-0 items-center bg-[#bdbdbd] pl-[5px] font-bold text-[#f4f4f4]">
                  Base
                </div>
                {propRows.map(([k, v, open], i) => (
                  <div key={k} className={`flex h-[21px] shrink-0 items-center ${i % 2 ? "bg-white" : "bg-[#f4f5f5]"}`}>
                    <div className="flex h-full w-[20px] items-center justify-center pl-[2px]">
                      {open && <ChevronRight className="h-[12px] w-[12px] text-[#999]" strokeWidth={2} />}
                    </div>
                    <div className="flex h-full w-[80px] items-center border-r border-b border-[#e2e2e2] pl-[5px] pt-px">{k}</div>
                    <div className="flex h-full flex-1 items-center whitespace-pre border-b border-[#e2e2e2] pl-[5px] pt-px tracking-[0.04px]">{v}</div>
                  </div>
                ))}
                {Array.from({ length: 18 }).map((_, i) => (
                  <div key={i} className={`h-[21px] shrink-0 ${i % 2 ? "bg-[#f5f5f5]" : "bg-white"}`} />
                ))}
              </div>

              <Seg a="View" b="Data" active="Data" className="mt-[5px] -translate-x-[2px] [&>div:first-child]:w-[51px]" />
            </div>
          </div>

          <div className="flex flex-1 flex-col">
            <Viewport />
            <div className="relative h-[22px] shrink-0 bg-[#ececec]">
              <div className="h-[10px] border-b border-[#d6d6d6] bg-[#e6e6e6]" />
              <div className="absolute left-[462px] top-[1px] flex h-[20px] w-[106px] items-center rounded-[4px] bg-linear-to-b from-[#2d94ff] to-[#0a78f5] pl-[3px] pt-px text-[13px] text-white">
                <X className="h-[13px] w-[13px]" strokeWidth={1.600} />
                <span className="ml-[4px]">Plectre : 1*</span>
              </div>
            </div>
          </div>
        </div>

        {/* status bar */}
        <div className="flex h-[43px] shrink-0 items-center border-t border-[#8c8c8c] bg-linear-to-b from-[#ececec] to-[#b4b4b4] pl-[2px] text-[13px] text-[#222]">
          <span className="tracking-[-0.02px]">Preselected: Unnamed.Fillet002.Face1 (-20.765078 mm, 3.253529 mm, 0.000000 mm)</span>
          <svg viewBox="0 0 16 16" className="ml-auto h-[16px] w-[16px]" fill="none">
            <circle cx="12" cy="3" r="2.500" fill="#333" />
            <circle cx="4" cy="13" r="2.500" fill="#333" />
            <path d="M10 3Q3 3 3 8M6 13Q13 13 13 8" stroke="#666" strokeWidth="2" />
          </svg>
          <span className="ml-[6px] text-[#333]">Gesture</span>
          <span className="ml-[37px] whitespace-nowrap tracking-[0.25px]">117,88 mm x 74,58 mm</span>
        </div>
      </div>
    </div>
  );
}
